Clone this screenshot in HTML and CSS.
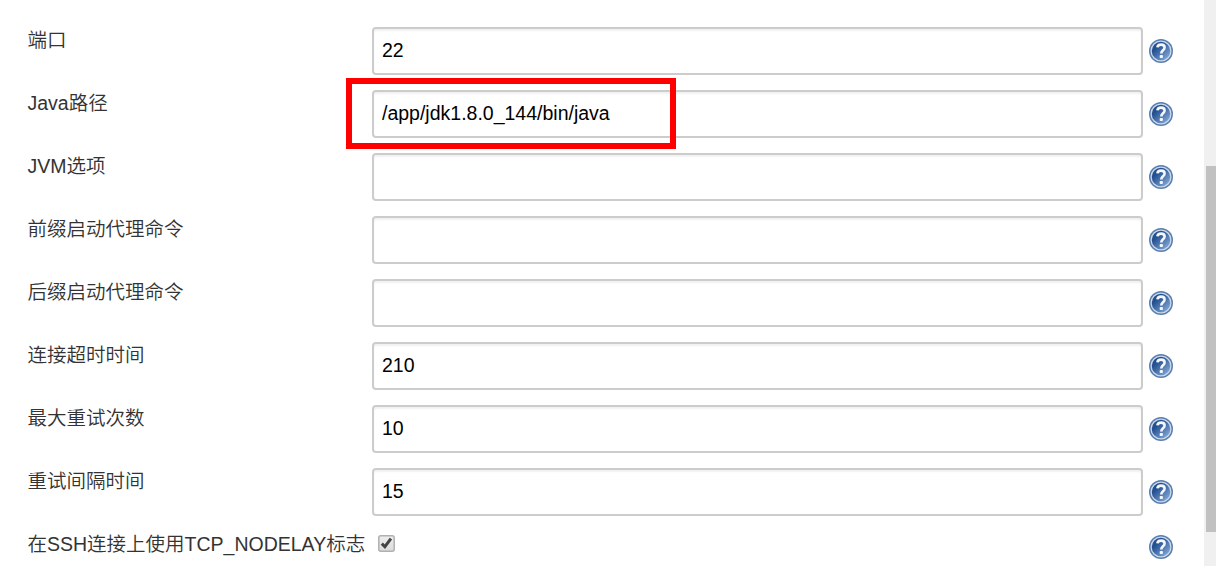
FILE: index.html
```html
<!DOCTYPE html>
<html lang="zh-CN">
<head>
    <meta charset="UTF-8">
    <meta name="viewport" content="width=device-width, initial-scale=1.0">
    <title>节点配置</title>
    <link rel="stylesheet" href="styles.css">
</head>
<body>
    <!-- shared help icon -->
    <svg class="symbols" width="0" height="0">
        <defs>
            <linearGradient id="blue" x1="0" y1="0" x2="1" y2="1">
                <stop offset="0.3" stop-color="#245090" />
                <stop offset="0.9" stop-color="#86abd9" />
            </linearGradient>
        </defs>
        <symbol id="help" viewBox="0 0 24 24">
            <circle cx="12" cy="12" r="12" fill="#5a7fb0" />
            <circle cx="12" cy="12" r="9.9" fill="url(#blue)" stroke="#cbd9ea" stroke-width="1.3" />
            <path d="M8.4 8.3C8.6 6.4 9.9 5.6 12 5.6c2.3 0 3.6 1 3.6 2.9 0 2.9-3.3 2.8-3.3 6" fill="none" stroke="#f4f7fb" stroke-width="2.6" />
            <rect x="10.7" y="16" width="3.2" height="3" rx="0.8" fill="#f4f7fb" />
        </symbol>
    </svg>

    <div class="page">
        <form class="config-form">
            <div class="row">
                <label class="name" for="port">端口</label>
                <div class="field"><input id="port" class="setting-input" value="22"></div>
                <svg class="help"><use href="#help" /></svg>
            </div>
            <div class="row">
                <label class="name" for="javaPath">Java路径</label>
                <div class="field">
                    <input id="javaPath" class="setting-input" value="/app/jdk1.8.0_144/bin/java">
                    <div class="highlight"></div>
                </div>
                <svg class="help"><use href="#help" /></svg>
            </div>
            <div class="row">
                <label class="name" for="jvmOptions">JVM选项</label>
                <div class="field"><input id="jvmOptions" class="setting-input"></div>
                <svg class="help"><use href="#help" /></svg>
            </div>
            <div class="row">
                <label class="name" for="prefixCmd">前缀启动代理命令</label>
                <div class="field"><input id="prefixCmd" class="setting-input"></div>
                <svg class="help"><use href="#help" /></svg>
            </div>
            <div class="row">
                <label class="name" for="suffixCmd">后缀启动代理命令</label>
                <div class="field"><input id="suffixCmd" class="setting-input"></div>
                <svg class="help"><use href="#help" /></svg>
            </div>
            <div class="row">
                <label class="name" for="timeout">连接超时时间</label>
                <div class="field"><input id="timeout" class="setting-input" value="210"></div>
                <svg class="help"><use href="#help" /></svg>
            </div>
            <div class="row">
                <label class="name" for="retries">最大重试次数</label>
                <div class="field"><input id="retries" class="setting-input" value="10"></div>
                <svg class="help"><use href="#help" /></svg>
            </div>
            <div class="row">
                <label class="name" for="retryWait">重试间隔时间</label>
                <div class="field"><input id="retryWait" class="setting-input" value="15"></div>
                <svg class="help"><use href="#help" /></svg>
            </div>
            <div class="row check-row">
                <label class="check-name">在SSH连接上使用TCP_NODELAY标志</label>
                <svg class="checkbox" viewBox="0 0 17 17">
                    <defs>
                        <linearGradient id="box" x1="0" y1="0" x2="0" y2="1">
                            <stop offset="0" stop-color="#ededed" />
                            <stop offset="1" stop-color="#dcdcdc" />
                        </linearGradient>
                    </defs>
                    <rect x="0.8" y="0.8" width="15.4" height="15.4" rx="2" fill="url(#box)" stroke="#b0b0b0" stroke-width="1.5" />
                    <path d="M3.8 8.6l3.1 3.1 6-8" fill="none" stroke="#444" stroke-width="3" />
                </svg>
                <svg class="help"><use href="#help" /></svg>
            </div>
        </form>
        <div class="scrollbar">
            <div class="thumb"></div>
        </div>
    </div>
</body>
</html>
```

FILE: styles.css
```css
body {
    margin: 0;
    background: #fff;
    color: #333;
    font-family: "Liberation Sans", Arial, "Noto Sans CJK SC", sans-serif;
    font-size: 19.5px;
    overflow: hidden;
}

.symbols {
    display: block;
}

.page {
    display: flex;
    height: 566px;
}

.config-form {
    flex-grow: 1;
    padding: 27px 31px 0 27.5px;
}

.row {
    display: flex;
    align-items: center;
    height: 48px;
    margin-bottom: 15px;
}

.name {
    align-self: flex-start;
    width: 344.5px;
    line-height: 26px;
    font-weight: 350;
}

.field {
    position: relative;
    width: 771px;
    height: 48px;
    margin-right: 6px;
}

.setting-input {
    display: block;
    width: 100%;
    height: 48px;
    box-sizing: border-box;
    margin: 0;
    padding: 0 8px 1px;
    border: 2px solid #ccc;
    border-radius: 4px;
    box-shadow: inset 0 2px 2px rgba(0, 0, 0, 0.06);
    background: #fff;
    color: #000;
    font: inherit;
    outline: none;
}

/* red frame around the java path */
.highlight {
    position: absolute;
    left: -26px;
    top: -12px;
    width: 330px;
    height: 71px;
    box-sizing: border-box;
    border: 6px solid #f00;
    pointer-events: none;
}

.help {
    flex: none;
    width: 24px;
    height: 24px;
}

.check-row {
    height: 30px;
    margin: 0;
}

.check-name {
    line-height: 26px;
    align-self: flex-start;
    font-weight: 350;
}

.checkbox {
    width: 17px;
    height: 17px;
    margin: 0 0 5px 12.5px;
}

.check-row .help {
    margin: 1px 0 0 auto;
}

.scrollbar {
    width: 12px;
    box-sizing: border-box;
    padding: 166px 0 0 2px;
    background: #f0f0f0;
}

.thumb {
    height: 366px;
    background: #c1c1c1;
}
```
